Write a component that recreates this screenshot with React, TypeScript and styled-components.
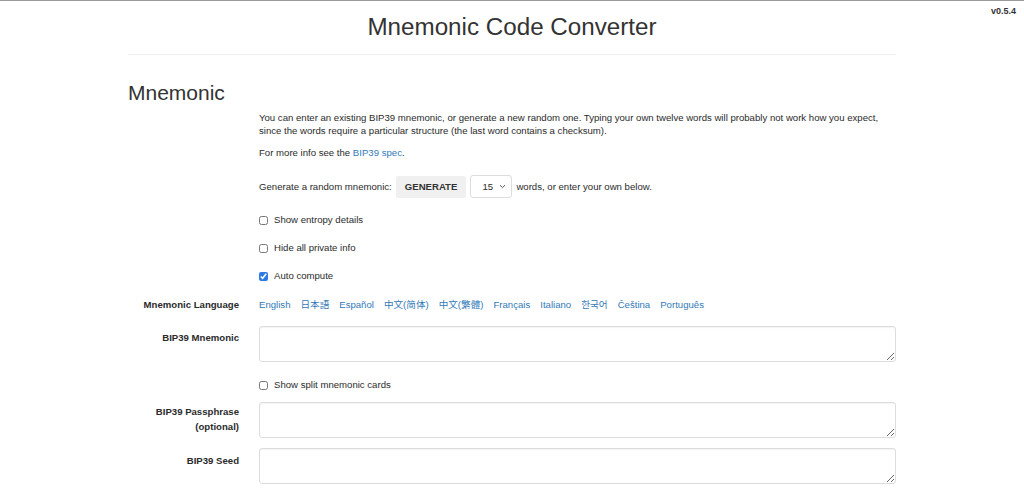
import styled, { createGlobalStyle } from "styled-components";

const GlobalStyle = createGlobalStyle`
  html, body {
    margin: 0;
    padding: 0;
    background: #fff;
  }
  body {
    border-top: 1px solid #999;
    font-family: "Liberation Sans", Arial, "Noto Sans CJK JP", sans-serif;
    color: #2b2b2b;
    font-size: 9.6px;
  }
`;

const Header = styled.header`
  display: grid;
  grid-template-columns: 1fr auto 1fr;
  align-items: start;
`;

const Title = styled.h1`
  grid-column: 2;
  margin: 12px 0 0;
  font-size: 24.2px;
  font-weight: 400;
  line-height: 28px;
  color: #333;
`;

const Version = styled.span`
  grid-column: 3;
  justify-self: end;
  margin: 5px 8px 0 0;
  font-size: 9px;
  font-weight: 700;
  color: #333;
`;

const Container = styled.main`
  width: 768px;
  margin: 0 auto;
`;

const Rule = styled.hr`
  border: 0;
  border-top: 1px solid #eee;
  margin: 13px 0 0;
`;

const SectionTitle = styled.h2`
  margin: 26px 0 0;
  font-size: 21px;
  font-weight: 400;
  line-height: 24px;
  color: #333;
`;

const Form = styled.div`
  display: grid;
  grid-template-columns: 111px 1fr;
  column-gap: 20px;
  align-items: start;
`;

const Label = styled.label<{ $top?: number }>`
  grid-column: 1;
  text-align: right;
  font-weight: 700;
  line-height: 15px;
  padding-top: ${(p) => p.$top ?? 0}px;
`;

const Field = styled.div<{ $mt?: number }>`
  grid-column: 2;
  margin-top: ${(p) => p.$mt ?? 0}px;
  line-height: 14px;
`;

const Para = styled.p<{ $mt?: number }>`
  margin: ${(p) => p.$mt ?? 0}px 0 0;
  line-height: 13px;
`;

const Link = styled.a`
  color: #337ab7;
  text-decoration: none;
`;

const GenerateRow = styled.div`
  display: flex;
  align-items: center;
  gap: 4px;
  margin-top: 16px;
`;

const Button = styled.button`
  height: 22px;
  padding: 0 9px;
  border: none;
  border-radius: 2px;
  background: #f0f0f0;
  font-family: inherit;
  font-size: 9.6px;
  font-weight: 700;
  color: #333;
`;

const Select = styled.div`
  display: flex;
  align-items: center;
  justify-content: space-between;
  box-sizing: border-box;
  width: 42px;
  height: 23px;
  padding: 0 5px 0 11px;
  border: 1px solid #ddd;
  border-radius: 3px;
`;

const CheckRow = styled.label<{ $mt: number }>`
  display: flex;
  align-items: center;
  gap: 6px;
  margin-top: ${(p) => p.$mt}px;
  line-height: 14px;
`;

const Check = styled.input`
  width: 9px;
  height: 9px;
  margin: 0;
  accent-color: #2f7ae5;
`;

const Languages = styled.div`
  display: flex;
  gap: 10px;
`;

const TextArea = styled.textarea`
  display: block;
  box-sizing: border-box;
  width: 100%;
  height: 36px;
  margin: 0;
  border: 1px solid #ddd;
  border-radius: 3px;
  box-shadow: inset 0 1px 1px rgba(0, 0, 0, 0.05);
  font-family: inherit;
`;

const Chevron = () => (
  <svg width="7" height="5" viewBox="0 0 7 5" fill="none" stroke="#555" strokeWidth="1">
    <path d="M1 1.2 L3.5 3.6 L6 1.2" />
  </svg>
);

const languages = [
  "English",
  "日本語",
  "Español",
  "中文(简体)",
  "中文(繁體)",
  "Français",
  "Italiano",
  "한국어",
  "Čeština",
  "Português",
];

export default function App() {
  return (
    <>
      <GlobalStyle />
      <Header>
        <Title>Mnemonic Code Converter</Title>
        <Version>v0.5.4</Version>
      </Header>
      <Container>
        <Rule />
        <SectionTitle>Mnemonic</SectionTitle>
        <Form>
          <Field $mt={6}>
            <Para $mt={0}>
              You can enter an existing BIP39 mnemonic, or generate a new random one. Typing your own
              twelve words will probably not work how you expect, since the words require a particular
              structure (the last word contains a checksum).
            </Para>
            <Para $mt={9}>
              For more info see the <Link href="#">BIP39 spec</Link>.
            </Para>
            <GenerateRow>
              <span>Generate a random mnemonic:</span>
              <Button>GENERATE</Button>
              <Select>
                <span>15</span>
                <Chevron />
              </Select>
              <span>words, or enter your own below.</span>
            </GenerateRow>
            <CheckRow $mt={15}>
              <Check type="checkbox" />
              Show entropy details
            </CheckRow>
            <CheckRow $mt={14}>
              <Check type="checkbox" />
              Hide all private info
            </CheckRow>
            <CheckRow $mt={14}>
              <Check type="checkbox" defaultChecked />
              Auto compute
            </CheckRow>
          </Field>

          <Label $top={14}>Mnemonic Language</Label>
          <Field $mt={15}>
            <Languages>
              {languages.map((l) => (
                <Link href="#" key={l}>
                  {l}
                </Link>
              ))}
            </Languages>
          </Field>

          <Label $top={18}>BIP39 Mnemonic</Label>
          <Field $mt={14}>
            <TextArea />
          </Field>

          <Field $mt={0}>
            <CheckRow $mt={16}>
              <Check type="checkbox" />
              Show split mnemonic cards
            </CheckRow>
          </Field>

          <Label $top={12}>
            BIP39 Passphrase
            <br />
            (optional)
          </Label>
          <Field $mt={10}>
            <TextArea />
          </Field>

          <Label $top={15}>BIP39 Seed</Label>
          <Field $mt={10}>
            <TextArea />
          </Field>
        </Form>
      </Container>
    </>
  );
}
